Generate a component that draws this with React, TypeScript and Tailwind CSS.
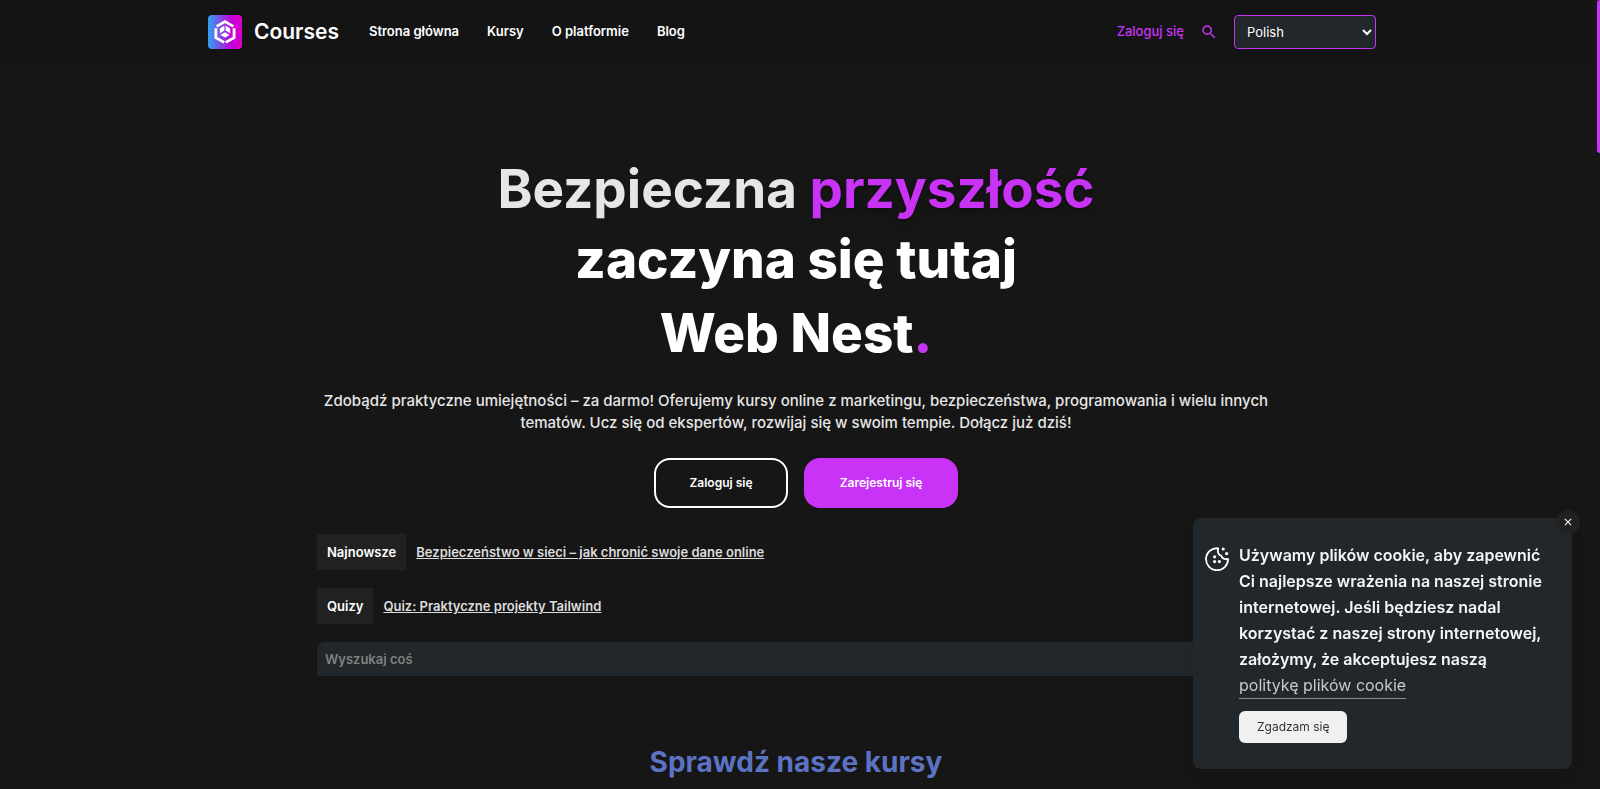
import { useState } from "react";
import { MdClose, MdSearch } from "react-icons/md";

const navLinks = [
    { name: 'Strona główna', href: '#home' },
    { name: 'Kursy', href: '#courses' },
    { name: 'O platformie', href: '#about' },
    { name: 'Blog', href: '#blog' },
]

const highlights = [
    { label: 'Najnowsze', title: 'Bezpieczeństwo w sieci – jak chronić swoje dane online', href: '#article' },
    { label: 'Quizy', title: 'Quiz: Praktyczne projekty Tailwind', href: '#quiz' },
]

function Logo() {
    return (
        <svg viewBox="0 0 34 34" className="h-[34px] w-[34px]" aria-hidden="true">
            <defs>
                <linearGradient id="logo-bg" x1="0" y1="0" x2="1" y2="0">
                    <stop offset="0" stopColor="#2ea3f2" />
                    <stop offset="0.7" stopColor="#c400d8" />
                    <stop offset="1" stopColor="#dc00c8" />
                </linearGradient>
            </defs>
            <rect width="34" height="34" rx="4" fill="url(#logo-bg)" />
            <g fill="none" stroke="#fff" strokeWidth="2.8">
                <path d="M8.6 11.4 17 6.6l8.4 4.8" />
                <path d="M7.9 13.2v9.4l8.3 4.8" />
                <path d="M26.1 13.2v9.4l-8.3 4.8" />
            </g>
            <g fill="#fff">
                <path d="M16.4 10.6v5l-4.6 2.8v-5z" />
                <path d="M17.6 10.6v5l4.6 2.8v-5z" />
                <path d="m17 17.2 4.6 2.7-4.6 2.7-4.6-2.7z" />
            </g>
        </svg>
    )
}

function CookieIcon() {
    return (
        <svg viewBox="0 0 24 24" className="mt-[5px] h-6 w-6 shrink-0" aria-hidden="true">
            <path
                d="M13.2 1.3A11 11 0 1 0 23 12c-3.6.6-6-.6-6.6-3.2-2.8-.6-4.2-3.6-3.2-7.5z"
                fill="none"
                stroke="currentColor"
                strokeWidth="1.8"
                strokeLinejoin="round"
            />
            <g fill="currentColor">
                <circle cx="18.2" cy="2" r="1.6" />
                <circle cx="21.6" cy="6.6" r="1.6" />
                <circle cx="9.6" cy="9.8" r="1.6" />
                <circle cx="9.6" cy="14.6" r="1.6" />
                <circle cx="14.4" cy="14.6" r="1.6" />
            </g>
        </svg>
    )
}

function Header() {
    const [language, setLanguage] = useState<string>('pl');

    return (
        <header className="bg-[#141414]">
            <div className="mx-auto flex h-16 w-full max-w-[1200px] items-center justify-between pl-3 pr-5">
                <div className="flex items-center">
                    <a href="#home" className="flex items-center gap-3">
                        <Logo />
                        <span className="text-[21px] font-semibold">Courses</span>
                    </a>
                    <nav className="ml-[30px] flex gap-7 text-[13px] font-semibold">
                        {navLinks.map(link => <a key={link.name} href={link.href}>{link.name}</a>)}
                    </nav>
                </div>
                <div className="flex items-center text-[#c933f5]">
                    <a href="#login" className="text-[13px] font-medium">Zaloguj się</a>
                    <button aria-label="Szukaj" className="mx-4">
                        <MdSearch className="h-[18px] w-[18px]" />
                    </button>
                    <select
                        aria-label="Język"
                        value={language}
                        onChange={(e) => setLanguage(e.target.value)}
                        className="h-[34px] w-[142px] rounded-sm border border-[#c933f5] bg-[#21272a] px-2 text-[13px] text-white"
                    >
                        <option value="pl">Polish</option>
                        <option value="en">English</option>
                    </select>
                </div>
            </div>
        </header>
    )
}

function CookieNotice({ onClose }: { onClose: () => void }) {
    return (
        <aside className="fixed bottom-5 right-7 w-[379px] rounded-lg bg-[#21272a] pb-[26px] pl-3 pr-4 pt-6 shadow-lg">
            <button
                onClick={onClose}
                aria-label="Zamknij"
                className="absolute -right-2 -top-2 flex h-6 w-6 items-center justify-center rounded-full bg-[#212121]"
            >
                <MdClose className="h-3 w-3" />
            </button>
            <div className="flex gap-2.5">
                <CookieIcon />
                <div>
                    <p className="text-base/[26px] font-semibold text-[#f5f5f5]">
                        Używamy plików cookie, aby zapewnić Ci najlepsze wrażenia na naszej stronie internetowej. Jeśli będziesz nadal korzystać z naszej strony internetowej, założymy, że akceptujesz naszą<br />
                        <a href="#cookies" className="inline-block border-b border-[#8a8d90] font-normal text-[#c8c8c8]">politykę plików cookie</a>
                    </p>
                    <button onClick={onClose} className="mt-3 h-8 rounded-md bg-[#f0f0f0] px-[18px] text-xs text-[#333]">Zgadzam się</button>
                </div>
            </div>
        </aside>
    )
}

export default function App() {
    const [query, setQuery] = useState<string>('');
    const [showCookies, setShowCookies] = useState<boolean>(true);

    return (
        <div className="min-h-screen bg-[#161616] pr-2 font-['Inter',sans-serif] text-white">
            <Header />
            <main className="mx-auto max-w-[958px]">
                <h1 className="pt-[90px] text-center text-[53px]/[70px] font-extrabold">
                    <span className="font-bold text-[#e6e6e6]">Bezpieczna <span className="text-[#c933f5] text-shadow-lg">przyszłość</span></span>
                    <span className="block">zaczyna się tutaj</span>
                    <span className="mt-1 block">Web Nest<span className="text-[#c933f5]">.</span></span>
                </h1>
                <p className="mt-[22px] text-center text-[15px]/[22px] font-medium text-[#e6e6e6]">
                    Zdobądź praktyczne umiejętności – za darmo! Oferujemy kursy online z marketingu, bezpieczeństwa, programowania i wielu innych tematów. Ucz się od ekspertów, rozwijaj się w swoim tempie. Dołącz już dziś!
                </p>
                <div className="ml-5 mt-6 flex justify-center gap-4 text-xs font-semibold">
                    <button className="h-[50px] w-[134px] rounded-2xl border-2 border-white">Zaloguj się</button>
                    <button className="h-[50px] w-[154px] rounded-2xl bg-[#c933f5]">Zarejestruj się</button>
                </div>
                <div className="mt-[26px] flex flex-col gap-[18px]">
                    {highlights.map(item => (
                        <div key={item.label} className="flex items-center gap-2.5 text-[13px]/5 font-semibold">
                            <span className="bg-[#212121] px-2.5 py-2">{item.label}</span>
                            <a href={item.href} className="text-[#dcdcdc] underline">{item.title}</a>
                        </div>
                    ))}
                    <input
                        type="search"
                        aria-label="Wyszukaj coś"
                        placeholder="Wyszukaj coś"
                        value={query}
                        onChange={(e) => setQuery(e.target.value)}
                        className="h-[34px] w-full rounded-t-lg bg-[#21272a] px-2 text-[13px] font-semibold placeholder:text-[#808080]"
                    />
                </div>
                <h2 className="mt-16 text-center text-[28px]/[44px] font-bold text-[#5c73c4]">Sprawdź nasze kursy</h2>
            </main>
            {showCookies && <CookieNotice onClose={() => setShowCookies(false)} />}
            <div className="fixed right-0 top-0 h-[153px] w-[3px] rounded-l-sm bg-[#c933f5]" />
        </div>
    )
}
